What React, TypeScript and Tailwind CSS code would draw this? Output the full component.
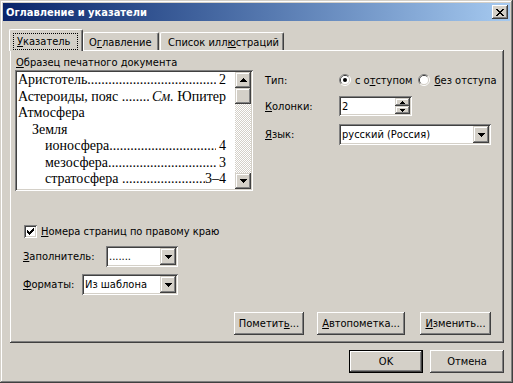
import React from "react";

const RAISED =
  "shadow-[inset_-1px_-1px_#404040,inset_1px_1px_#ffffff,inset_-2px_-2px_#808080,inset_2px_2px_#d4d0c8]";
const RAISED_S =
  "shadow-[inset_-1px_-1px_#404040,inset_1px_1px_#d4d0c8,inset_-2px_-2px_#808080,inset_2px_2px_#ffffff]";
const SUNKEN =
  "shadow-[inset_1px_1px_#808080,inset_-1px_-1px_#ffffff,inset_2px_2px_#404040,inset_-2px_-2px_#d4d0c8]";

function Arrow({ dir }: { dir: "up" | "down" }) {
  const rows = dir === "up" ? [1, 3, 5, 7] : [7, 5, 3, 1];
  return (
    <svg width="7" height="4" viewBox="0 0 7 4" shapeRendering="crispEdges">
      {rows.map((w, i) => (
        <rect key={i} x={(7 - w) / 2} y={i} width={w} height={1} fill="#000" />
      ))}
    </svg>
  );
}

function SmallArrow({ dir }: { dir: "up" | "down" }) {
  const rows = dir === "up" ? [1, 3, 5] : [5, 3, 1];
  return (
    <svg width="5" height="3" viewBox="0 0 5 3" shapeRendering="crispEdges">
      {rows.map((w, i) => (
        <rect key={i} x={(5 - w) / 2} y={i} width={w} height={1} fill="#000" />
      ))}
    </svg>
  );
}

function CloseGlyph() {
  const rows = [
    "xx....xx",
    ".xx..xx.",
    "..xxxx..",
    "...xx...",
    "..xxxx..",
    ".xx..xx.",
    "xx....xx",
  ];
  return (
    <svg width="8" height="7" viewBox="0 0 8 7" shapeRendering="crispEdges">
      {rows.flatMap((r, y) =>
        r.split("").map((c, x) =>
          c === "x" ? <rect key={`${x}-${y}`} x={x} y={y} width={1} height={1} fill="#000" /> : null
        )
      )}
    </svg>
  );
}

function CheckGlyph() {
  const rows = [
    "......x",
    ".....xx",
    "x...xxx",
    "xx.xxx.",
    "xxxxx..",
    ".xxx...",
    "..x....",
  ];
  return (
    <svg width="7" height="7" viewBox="0 0 7 7" shapeRendering="crispEdges">
      {rows.flatMap((r, y) =>
        r.split("").map((c, x) =>
          c === "x" ? <rect key={`${x}-${y}`} x={x} y={y} width={1} height={1} fill="#000" /> : null
        )
      )}
    </svg>
  );
}

function Radio({ checked }: { checked: boolean }) {
  return (
    <svg width="12" height="12" viewBox="0 0 12 12">
      <path d="M2.11 9.89 A5.5 5.5 0 0 1 9.89 2.11" stroke="#808080" strokeWidth="1" fill="none" />
      <path d="M9.89 2.11 A5.5 5.5 0 0 1 2.11 9.89" stroke="#ffffff" strokeWidth="1" fill="none" />
      <path d="M2.82 9.18 A4.5 4.5 0 0 1 9.18 2.82" stroke="#404040" strokeWidth="1" fill="none" />
      <path d="M9.18 2.82 A4.5 4.5 0 0 1 2.82 9.18" stroke="#d4d0c8" strokeWidth="1" fill="none" />
      <circle cx="6" cy="6" r="4" fill="#ffffff" />
      {checked && <circle cx="6" cy="6" r="2" fill="#000" />}
    </svg>
  );
}

function Combo({ width, text }: { width: string; text: string }) {
  return (
    <div className={`${width} h-[21px] bg-white ${SUNKEN} p-[2px] flex`}>
      <div className="flex-1 flex items-center pl-[1px] whitespace-nowrap overflow-hidden">{text}</div>
      <div className={`w-[16px] h-[17px] bg-[#d4d0c8] ${RAISED_S} flex items-center justify-center`}>
        <Arrow dir="down" />
      </div>
    </div>
  );
}

function Btn({ width, children, def }: { width: string; children: React.ReactNode; def?: boolean }) {
  if (def) {
    return (
      <div className={`${width} h-[23px] border border-black`}>
        <div className={`w-full h-full bg-[#d4d0c8] ${RAISED} flex items-center justify-center`}>{children}</div>
      </div>
    );
  }
  return (
    <div className={`${width} h-[23px] bg-[#d4d0c8] ${RAISED} flex items-center justify-center`}>{children}</div>
  );
}

const DOTS =
  "................................................................................................................................";

function Leader() {
  return <span className="flex-1 min-w-0 overflow-hidden whitespace-nowrap">{DOTS}</span>;
}

export default function App() {
  return (
    <div className="w-[513px] h-[383px] bg-[#d4d0c8] p-[3px] flex flex-col font-['DejaVu_Sans_Condensed','Liberation_Sans',sans-serif] text-[11px] leading-[13px] text-black overflow-hidden shadow-[inset_-1px_-1px_#404040,inset_1px_1px_#d4d0c8,inset_-2px_-2px_#808080,inset_2px_2px_#ffffff]">
      {/* Title bar */}
      <div className="h-[18px] flex items-center bg-linear-to-r from-[#0a246a] to-[#a6caf0] pl-[3px] pr-[2px]">
        <span className="flex-1 text-white font-bold whitespace-nowrap">Оглавление и указатели</span>
        <div className={`w-[16px] h-[14px] bg-[#d4d0c8] ${RAISED} flex items-center justify-center`}>
          <CloseGlyph />
        </div>
      </div>

      {/* Tabs */}
      <div className="mt-[8px] ml-[6px] h-[21px] flex items-end">
        <div className="relative z-10 -mb-[1px] w-[74px] h-[22px] bg-[#d4d0c8] border-l border-t border-white border-r border-r-[#404040] rounded-t-[2px] shadow-[inset_-1px_0_#808080] pl-[3px] pt-[3px]">
          <div className="w-[65px] h-[17px] border border-dotted border-black flex items-center pl-[3px] whitespace-nowrap">
            <span>
              <u>У</u>казатель
            </span>
          </div>
        </div>
        <div className="w-[76px] h-[18px] border-l border-t border-white border-r border-r-[#404040] rounded-t-[2px] shadow-[inset_-1px_0_#808080] pl-[5px] pt-[3px] whitespace-nowrap">
          О<u>г</u>лавление
        </div>
        <div className="ml-[1px] w-[124px] h-[18px] border-l border-t border-white border-r border-r-[#404040] rounded-t-[2px] shadow-[inset_-1px_0_#808080] pl-[7px] pt-[3px] whitespace-nowrap">
          Список илл<u>ю</u>страций
        </div>
      </div>

      {/* Panel */}
      <div className="ml-[7px] w-[494px] h-[293px] flex flex-col shadow-[inset_-1px_-1px_#404040,inset_1px_1px_#ffffff,inset_-2px_-2px_#808080]">
        <div className="flex items-start">
          {/* Preview */}
          <div className="ml-[5px] w-[238px] flex flex-col">
            <div className="mt-[6px] ml-[1px] h-[13px] whitespace-nowrap">
              <u>О</u>бразец печатного документа
            </div>
            <div className={`mt-[1px] h-[121px] bg-white ${SUNKEN} p-[2px] flex`}>
              <div className="flex-1 min-w-0 h-[117px] overflow-hidden pl-[1px] pr-[9px] font-['Liberation_Serif',serif] text-[14px] leading-[16.5px]">
                <div className="flex whitespace-nowrap">
                  <span>Аристотель</span>
                  <Leader />
                  <span>&nbsp;2</span>
                </div>
                <div className="flex whitespace-nowrap">
                  <span>Астероиды, пояс&nbsp;</span>
                  <Leader />
                  <span>
                    &nbsp;<i>См.</i> Юпитер
                  </span>
                </div>
                <div className="whitespace-nowrap">Атмосфера</div>
                <div className="pl-[14px] whitespace-nowrap">Земля</div>
                <div className="pl-[27px] flex whitespace-nowrap">
                  <span>ионосфера</span>
                  <Leader />
                  <span>&nbsp;4</span>
                </div>
                <div className="pl-[27px] flex whitespace-nowrap">
                  <span>мезосфера</span>
                  <Leader />
                  <span>&nbsp;3</span>
                </div>
                <div className="pl-[27px] flex whitespace-nowrap">
                  <span>стратосфера&nbsp;</span>
                  <Leader />
                  <span>3–4</span>
                </div>
                <div className="pl-[27px] flex whitespace-nowrap">
                  <span>тропосфера</span>
                  <Leader />
                  <span>&nbsp;2</span>
                </div>
              </div>
              <div className="w-[16px] flex flex-col">
                <div className={`h-[16px] bg-[#d4d0c8] ${RAISED_S} flex items-center justify-center`}>
                  <Arrow dir="up" />
                </div>
                <div className={`h-[16px] bg-[#d4d0c8] ${RAISED_S}`} />
                <div className="flex-1 bg-[image:repeating-conic-gradient(#ffffff_0%_25%,#d4d0c8_0%_50%)] bg-[length:2px_2px]" />
                <div className={`h-[16px] bg-[#d4d0c8] ${RAISED_S} flex items-center justify-center`}>
                  <Arrow dir="down" />
                </div>
              </div>
            </div>
          </div>

          {/* Right options */}
          <div className="ml-[12px] flex flex-col">
            <div className="mt-[22px] h-[16px] flex items-center whitespace-nowrap">
              <span className="w-[74px]">Тип:</span>
              <Radio checked />
              <span className="ml-[4px]">
                с о<u>т</u>ступом
              </span>
              <span className="ml-[6px] flex items-center">
                <Radio checked={false} />
              </span>
              <span className="ml-[4px]">
                <u>б</u>ез отступа
              </span>
            </div>
            <div className="mt-[8px] h-[20px] flex items-center whitespace-nowrap">
              <span className="w-[74px]">
                <u>К</u>олонки:
              </span>
              <div className={`w-[73px] h-[20px] bg-white ${SUNKEN} p-[2px] flex`}>
                <div className="flex-1 flex items-center pl-[1px]">2</div>
                <div className="w-[15px] flex flex-col">
                  <div className={`h-[8px] bg-[#d4d0c8] ${RAISED_S} flex items-center justify-center`}>
                    <SmallArrow dir="up" />
                  </div>
                  <div className={`h-[8px] bg-[#d4d0c8] ${RAISED_S} flex items-center justify-center`}>
                    <SmallArrow dir="down" />
                  </div>
                </div>
              </div>
            </div>
            <div className="mt-[8px] h-[21px] flex items-center whitespace-nowrap">
              <span className="w-[74px]">
                <u>Я</u>зык:
              </span>
              <Combo width="w-[152px]" text="русский (Россия)" />
            </div>
          </div>
        </div>

        {/* Checkbox */}
        <div className="mt-[34px] ml-[14px] h-[13px] flex items-center whitespace-nowrap">
          <div className={`w-[13px] h-[13px] bg-white ${SUNKEN} flex items-center justify-center`}>
            <CheckGlyph />
          </div>
          <span className="ml-[4px]">
            <u>Н</u>омера страниц по правому краю
          </span>
        </div>

        <div className="mt-[8px] ml-[13px] h-[21px] flex items-center whitespace-nowrap">
          <span className="w-[83px]">
            <u>З</u>аполнитель:
          </span>
          <Combo width="w-[72px]" text="......." />
        </div>

        <div className="mt-[7px] ml-[13px] h-[21px] flex items-center whitespace-nowrap">
          <span className="w-[59px]">
            <u>Ф</u>орматы:
          </span>
          <Combo width="w-[96px]" text="Из шаблона" />
        </div>

        <div className="mt-[17px] mr-[13px] flex justify-end whitespace-nowrap">
          <Btn width="w-[70px]">
            <span>
              Пометит<u>ь</u>...
            </span>
          </Btn>
          <div className="ml-[13px]">
            <Btn width="w-[88px]">
              <span>
                <u>А</u>втопометка...
              </span>
            </Btn>
          </div>
          <div className="ml-[15px]">
            <Btn width="w-[71px]">
              <span>
                <u>И</u>зменить...
              </span>
            </Btn>
          </div>
        </div>
      </div>

      {/* Footer */}
      <div className="mt-[7px] mr-[6px] flex justify-end">
        <Btn width="w-[74px]" def>
          OK
        </Btn>
        <div className="ml-[7px]">
          <Btn width="w-[74px]">Отмена</Btn>
        </div>
      </div>
    </div>
  );
}
